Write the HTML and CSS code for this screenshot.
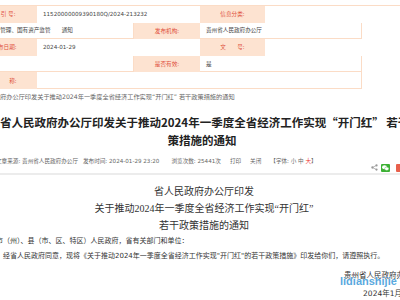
FILE: index.html
```html
<!DOCTYPE html>
<html lang="zh-CN">

<head>
    <meta charset="utf-8">
    <title>省人民政府办公厅印发关于推动2024年一季度全省经济工作实现“开门红”若干政策措施的通知</title>
    <link rel="stylesheet" href="styles.css">
</head>

<body>
    <div class="info">
        <div class="info-row">
            <div class="cell label w65">索 引 号:</div>
            <div class="cell value w163">11520000009390180Q/2024-213232</div>
            <div class="cell label w65">信息分类:</div>
            <div class="cell value wide"></div>
        </div>
        <div class="info-row">
            <div class="cell value w162 boxed topic">财务管理、国有资产监管　　通知</div>
            <div class="cell label w66">发布机构:</div>
            <div class="cell value w162 boxed">贵州省人民政府办公厅</div>
        </div>
        <div class="info-row">
            <div class="cell label w65">发布日期:</div>
            <div class="cell value w163">2024-01-29</div>
            <div class="cell label w65">文　　号:</div>
            <div class="cell value wide"></div>
        </div>
        <div class="info-row">
            <div class="cell value w162 boxed"></div>
            <div class="cell label w66">是否有效:</div>
            <div class="cell value w162 boxed">是</div>
        </div>
        <div class="info-row">
            <div class="cell label w65">名　　称:</div>
            <div class="cell value w325 boxed"></div>
        </div>
    </div>

    <div class="doc-name">贵州省人民政府办公厅印发关于推动2024年一季度全省经济工作实现“开门红” 若干政策措施的通知</div>

    <h1 class="title">贵州省人民政府办公厅印发关于推动2024年一季度全省经济工作实现“开门红” 若干政策措施的通知</h1>

    <div class="meta">
        <span>文章来源: 贵州省人民政府办公厅</span>
        <span>发布时间: 2024-01-29 23:20</span>
        <span>浏览次数: 25441次</span>
        <span>打印</span>
        <span>关闭</span>
        <span>【字体: 小 中 <em class="big">大</em>】</span>
        <div class="share">
            <svg class="share-icon" width="7" height="7" viewBox="0 0 8 8">
                <circle cx="6.3" cy="1.6" r="1.3" fill="#999"/>
                <circle cx="1.6" cy="4" r="1.3" fill="#999"/>
                <circle cx="6.3" cy="6.4" r="1.3" fill="#999"/>
                <path d="M6.3 1.6 L1.6 4 L6.3 6.4" stroke="#999" stroke-width="0.8" fill="none"/>
            </svg>
            <span class="btn wechat">
                <svg width="7" height="6" viewBox="0 0 14 12">
                    <ellipse cx="5" cy="4.5" rx="5" ry="4" fill="#fff"/>
                    <ellipse cx="9.5" cy="7.5" rx="4.3" ry="3.5" fill="#fff" stroke="#3cb034" stroke-width="0.8"/>
                </svg>
            </span>
            <span class="btn weibo"></span>
        </div>
    </div>

    <div class="content">
        <div class="heading">
            <p>省人民政府办公厅印发</p>
            <p>关于推动2024年一季度全省经济工作实现“开门红”</p>
            <p>若干政策措施的通知</p>
        </div>
        <p class="greet">各市（州）、县（市、区、特区）人民政府，省有关部门和单位：</p>
        <p class="para">经省人民政府同意，现将《关于推动2024年一季度全省经济工作实现"开门红"的若干政策措施》印发给你们，请遵照执行。</p>
        <div class="sign">
            <p>贵州省人民政府办公厅</p>
            <p>2024年1月29日</p>
            <span class="mark">lidianshijie</span>
        </div>
    </div>
</body>

</html>
```

FILE: styles.css
```css
:root {
    --label-bg: #fde3d1;
    --label-color: #e0503c;
    --line: #fbdcc6;
    --text: #333;
    --grey: #666;
}

body {
    margin: 0;
    width: 400px;
    overflow: hidden;
    font-family: "DejaVu Sans", "Noto Sans CJK SC", sans-serif;
    color: var(--text);
    background: #fff;
}

p {
    margin: 0;
}

/* info table */
.info {
    margin: 5px 0 0 -28px;
    width: 460px;
    border-top: 1px solid var(--line);
    font-size: 5.6px;
}

.info-row {
    display: flex;
    height: 16.6px;
}

.cell {
    box-sizing: border-box;
    height: 100%;
    display: flex;
    align-items: center;
    white-space: nowrap;
    overflow: hidden;
}

.label {
    justify-content: center;
    background: var(--label-bg);
    color: var(--label-color);
}

.value {
    padding-left: 6px;
    color: #444;
}

.boxed {
    border-right: 1px solid var(--line);
    border-bottom: 1px solid var(--line);
}

.topic {
    padding-left: 17px;
}

.w65 { width: 65px; }
.w66 { width: 66px; }
.w162 { width: 162px; }
.w163 { width: 163px; }
.w325 { width: 325px; }
.wide { flex: 1; }

.doc-name {
    margin-left: -37px;
    white-space: nowrap;
    font-size: 6.2px;
    line-height: 15px;
    color: var(--grey);
}

.title {
    margin: 9px -27px 0 -23px;
    font-family: "Noto Sans CJK SC", sans-serif;
    font-size: 11.5px;
    line-height: 18px;
    font-weight: bold;
    text-align: left;
    text-align-last: center;
    color: #222;
}

/* meta line */
.meta {
    display: flex;
    align-items: flex-start;
    gap: 9px;
    margin: 5px 0 0 -4px;
    height: 19px;
    border-bottom: 2px solid #ececec;
    font-size: 5.6px;
    line-height: 14px;
    color: var(--grey);
    white-space: nowrap;
}

.meta span:first-child {
    margin-right: -4px;
}

.meta span:nth-child(2) {
    margin-right: 3px;
}

.big {
    font-style: normal;
    color: #e33;
}

.share {
    display: flex;
    align-items: center;
    gap: 3px;
    margin-left: auto;
    margin-right: -5px;
    align-self: flex-end;
    margin-bottom: 1px;
}

.btn {
    display: flex;
    align-items: center;
    justify-content: center;
    width: 9px;
    height: 8px;
    border-radius: 1px;
}

.wechat {
    background: #3cb034;
}

.weibo {
    background: #e8604c;
}

/* document body */
.content {
    margin: 8.5px -19px 0 -11px;
}

.heading {
    text-align: center;
    font-family: "Liberation Serif", "Noto Sans CJK SC", serif;
    font-size: 10px;
    line-height: 17px;
    color: #333;
}

.greet, .para {
    font-size: 7px;
    line-height: 15px;
    color: #333;
    white-space: nowrap;
}

.para {
    text-indent: 14px;
}

.sign {
    position: relative;
    margin-top: 4.5px;
    text-align: right;
    font-size: 7.5px;
    line-height: 14px;
    color: #333;
}

.sign p + p {
    margin-top: 4px;
}

.mark {
    position: absolute;
    left: 351px;
    top: 6px;
    font-family: "Liberation Sans", sans-serif;
    font-size: 11px;
    font-weight: bold;
    line-height: 12px;
    color: #5aa9de;
    text-shadow: 0 0 1px #fff;
}
```
